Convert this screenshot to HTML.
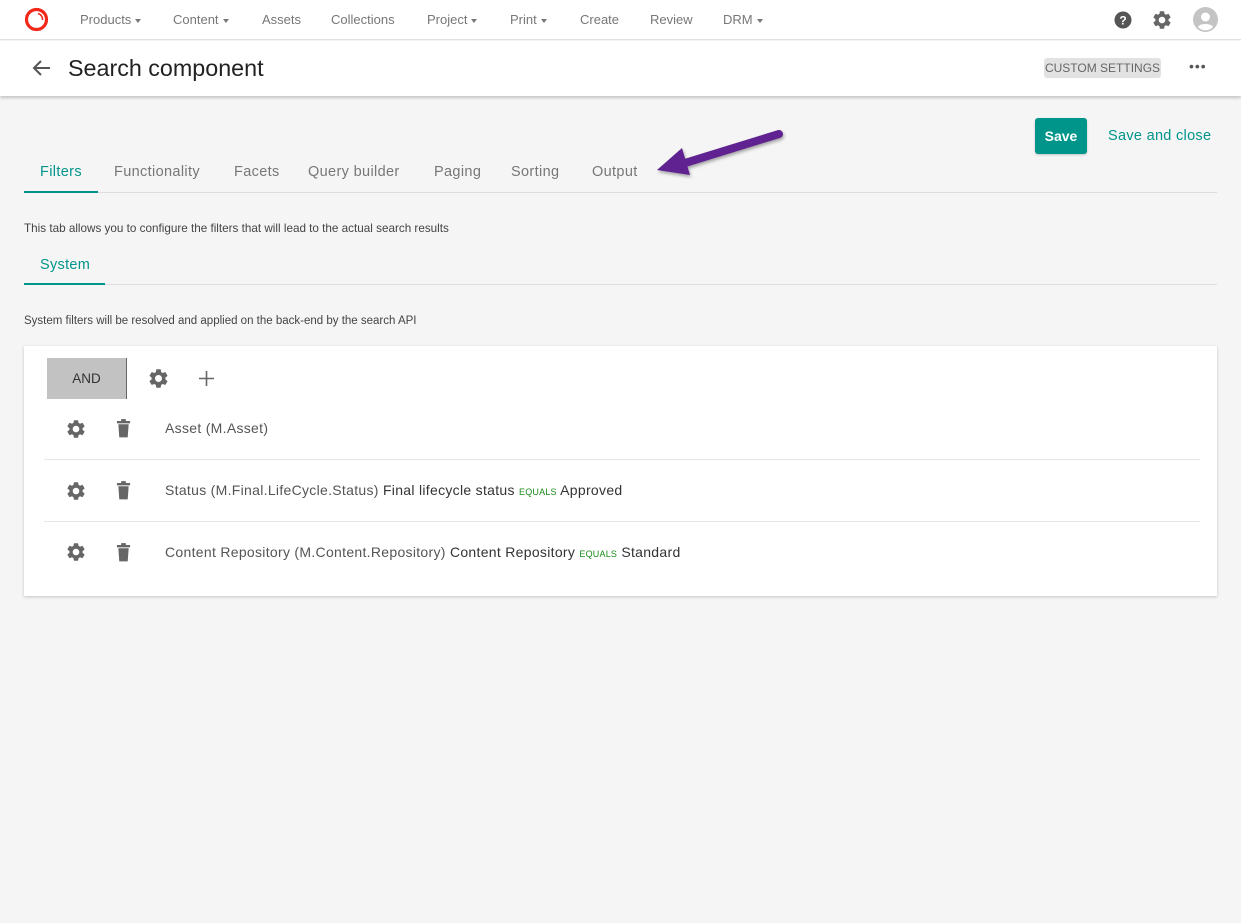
<!DOCTYPE html>
<html><head><meta charset="utf-8"><style>
*{margin:0;padding:0;box-sizing:border-box}
body{width:1241px;height:923px;background:#f5f5f5;font-family:"Liberation Sans",sans-serif;position:relative;overflow:hidden;color:#333}
.a{position:absolute;white-space:nowrap}
.nav{font-size:13px;color:#777;top:12px}
.car{display:inline-block;width:0;height:0;border-left:3.5px solid transparent;border-right:3.5px solid transparent;border-top:4px solid #777;vertical-align:middle;margin-left:4px}
.tab{font-size:14.5px;color:#777;top:164px;letter-spacing:.35px}
.row{font-size:14px;color:#555;letter-spacing:.3px}
.b{color:#333}
.eq{font-size:9px;color:#1a8a1a;letter-spacing:.2px}
</style></head><body>
<svg width="0" height="0" style="position:absolute"><defs>
<symbol id="g" viewBox="0 0 24 24"><path fill="#666" d="M19.14,12.94c0.04-0.3,0.06-0.61,0.06-0.94c0-0.32-0.02-0.64-0.07-0.94l2.03-1.58c0.18-0.14,0.23-0.41,0.12-0.61l-1.92-3.32c-0.12-0.22-0.37-0.29-0.59-0.22l-2.39,0.96c-0.5-0.38-1.03-0.7-1.62-0.94L14.4,2.81c-0.04-0.24-0.24-0.41-0.48-0.41h-3.84c-0.24,0-0.43,0.17-0.47,0.41L9.25,5.35C8.66,5.59,8.12,5.92,7.63,6.29L5.24,5.33c-0.22-0.08-0.47,0-0.59,0.22L2.74,8.87C2.62,9.080,2.66,9.34,2.86,9.48l2.03,1.58C4.84,11.36,4.8,11.69,4.8,12s0.02,0.64,0.07,0.94l-2.03,1.58c-0.18,0.14-0.23,0.41-0.12,0.61l1.92,3.32c0.12,0.22,0.37,0.29,0.59,0.22l2.39-0.96c0.5,0.38,1.03,0.7,1.62,0.94l0.36,2.54c0.05,0.24,0.24,0.41,0.48,0.41h3.84c0.24,0,0.44-0.17,0.47-0.41l0.36-2.54c0.59-0.24,1.13-0.56,1.62-0.94l2.39,0.96c0.22,0.08,0.47,0,0.59-0.22l1.92-3.32c0.12-0.22,0.07-0.47-0.12-0.61L19.14,12.94z M12,15.6c-1.98,0-3.6-1.62-3.6-3.6s1.62-3.6,3.6-3.6s3.6,1.62,3.6,3.6S13.98,15.6,12,15.6z"/></symbol>
<symbol id="t" viewBox="0 0 16 20"><rect x="1" y="2" width="14" height="2.5" fill="#666"/><rect x="5.5" y="0" width="5" height="2.5" fill="#666"/><path d="M2.5 5.5h11l-1 14h-9z" fill="#666"/></symbol>
</defs></svg>

<div class="a" style="left:0;top:0;width:1241px;height:40px;background:#fff;border-bottom:1px solid #e0e0e0"></div>
<svg class="a" style="left:24px;top:7px" width="25" height="25" viewBox="0 0 25 25"><circle cx="12.5" cy="12.5" r="10" fill="none" stroke="#f2281a" stroke-width="3.2"/><path d="M14 6.5a6 6 0 0 1 4.5 6.5" stroke="#f2281a" stroke-width="1.5" fill="none"/></svg>
<div class="a nav" style="left:80px">Products<span class="car"></span></div>
<div class="a nav" style="left:173px">Content<span class="car"></span></div>
<div class="a nav" style="left:262px">Assets</div>
<div class="a nav" style="left:331px">Collections</div>
<div class="a nav" style="left:427px">Project<span class="car"></span></div>
<div class="a nav" style="left:510px">Print<span class="car"></span></div>
<div class="a nav" style="left:580px">Create</div>
<div class="a nav" style="left:650px">Review</div>
<div class="a nav" style="left:723px">DRM<span class="car"></span></div>
<svg class="a" style="left:1114px;top:11px" width="18" height="18" viewBox="0 0 18 18"><circle cx="9" cy="9" r="8.5" fill="#555"/><text x="9" y="13.5" font-size="12" font-weight="bold" text-anchor="middle" fill="#fff" font-family="Liberation Sans">?</text></svg>
<svg class="a" style="left:1151px;top:9px" width="22" height="22"><use href="#g"/></svg>
<svg class="a" style="left:1193px;top:7px" width="25" height="25" viewBox="0 0 25 25"><circle cx="12.5" cy="12.5" r="12.5" fill="#c4c4c4"/><circle cx="12.5" cy="10" r="4.5" fill="#fff"/><path d="M5 20c2-4 13-4 15 0a10 10 0 0 1-15 0z" fill="#fff"/></svg>

<div class="a" style="left:0;top:41px;width:1241px;height:55px;background:#fff;box-shadow:0 2px 3px rgba(0,0,0,.2)"></div>
<svg class="a" style="left:32px;top:59px" width="20" height="18" viewBox="0 0 20 18"><path d="M18 9H3M9 2L2 9l7 7" stroke="#555" stroke-width="2" fill="none"/></svg>
<div class="a" style="left:68px;top:55px;font-size:23.3px;color:#222">Search component</div>
<div class="a" style="left:1044px;top:58px;width:117px;height:20px;background:#e2e2e2;border-radius:3px;font-size:12px;color:#666;text-align:center;line-height:20px">CUSTOM SETTINGS</div>
<div class="a" style="left:1189px;top:58px;font-size:14px;color:#555;letter-spacing:1px">•••</div>

<div class="a" style="left:1035px;top:118px;width:52px;height:36px;background:#00958a;border-radius:3px;color:#fff;font-weight:bold;font-size:14px;text-align:center;line-height:36px;box-shadow:0 1px 2px rgba(0,0,0,.2)">Save</div>
<div class="a" style="left:1108px;top:128px;font-size:14.5px;color:#00958a;letter-spacing:.3px">Save and close</div>

<svg class="a" style="left:640px;top:120px" width="160" height="70"><defs><filter id="s"><feDropShadow dx="1" dy="2" stdDeviation="1.5" flood-opacity=".35"/></filter></defs><g filter="url(#s)"><path d="M139 14L45 43" stroke="#5e2390" stroke-width="8" stroke-linecap="round"/><path d="M17 50L42 28L50 55z" fill="#5e2390"/></g></svg>

<div class="a tab" style="left:40px;color:#00958a">Filters</div>
<div class="a tab" style="left:114px">Functionality</div>
<div class="a tab" style="left:234px">Facets</div>
<div class="a tab" style="left:308px">Query builder</div>
<div class="a tab" style="left:434px">Paging</div>
<div class="a tab" style="left:511px">Sorting</div>
<div class="a tab" style="left:592px">Output</div>
<div class="a" style="left:24px;top:192px;width:1193px;height:1px;background:#ddd"></div>
<div class="a" style="left:24px;top:191px;width:74px;height:2px;background:#00958a"></div>

<div class="a" style="left:24px;top:222px;font-size:11.7px;color:#444">This tab allows you to configure the filters that will lead to the actual search results</div>
<div class="a" style="left:40px;top:257px;font-size:14.5px;color:#00958a;letter-spacing:.3px">System</div>
<div class="a" style="left:24px;top:284px;width:1193px;height:1px;background:#ddd"></div>
<div class="a" style="left:24px;top:283px;width:81px;height:2px;background:#00958a"></div>
<div class="a" style="left:24px;top:315px;font-size:11.5px;color:#444">System filters will be resolved and applied on the back-end by the search API</div>

<div class="a" style="left:24px;top:346px;width:1193px;height:250px;background:#fff;box-shadow:0 1px 3px rgba(0,0,0,.2)"></div>
<div class="a" style="left:47px;top:358px;width:80px;height:41px;background:#c2c2c2;border-right:1px solid #666;font-size:13.5px;color:#333;text-align:center;line-height:41px">AND</div>
<svg class="a" style="left:147px;top:367px" width="23" height="23"><use href="#g"/></svg>
<svg class="a" style="left:199px;top:371px" width="15" height="15"><path d="M7.5 0v15M0 7.5h15" stroke="#666" stroke-width="1.6"/></svg>

<svg class="a" style="left:65px;top:418px" width="22" height="22"><use href="#g"/></svg>
<svg class="a" style="left:116px;top:419px" width="15" height="19"><use href="#t"/></svg>
<div class="a row" style="left:165px;top:420px">Asset (M.Asset)</div>
<div class="a" style="left:44px;top:459px;width:1156px;height:1px;background:#e6e6e6"></div>

<svg class="a" style="left:65px;top:480px" width="22" height="22"><use href="#g"/></svg>
<svg class="a" style="left:116px;top:481px" width="15" height="19"><use href="#t"/></svg>
<div class="a row" style="left:165px;top:482px">Status (M.Final.LifeCycle.Status) <span class="b">Final lifecycle status</span> <span class="eq">EQUALS</span> <span class="b">Approved</span></div>
<div class="a" style="left:44px;top:521px;width:1156px;height:1px;background:#e6e6e6"></div>

<svg class="a" style="left:65px;top:541px" width="22" height="22"><use href="#g"/></svg>
<svg class="a" style="left:116px;top:543px" width="15" height="19"><use href="#t"/></svg>
<div class="a row" style="left:165px;top:544px">Content Repository (M.Content.Repository) <span class="b">Content Repository</span> <span class="eq">EQUALS</span> <span class="b">Standard</span></div>
</body></html>
